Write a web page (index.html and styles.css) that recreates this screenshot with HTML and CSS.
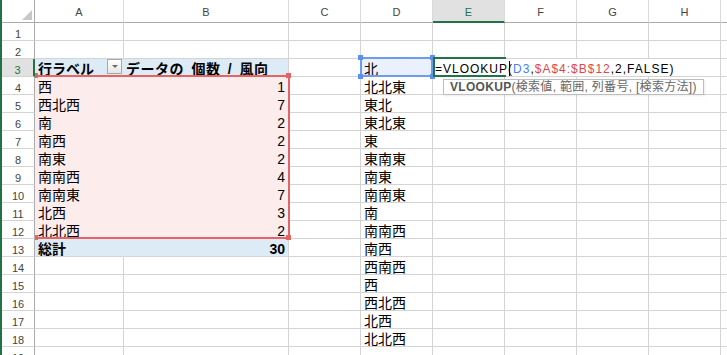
FILE: index.html
```html
<!DOCTYPE html>
<html lang="ja">
<head>
<meta charset="utf-8">
<title>Excel</title>
<link rel="stylesheet" href="styles.css">
</head>
<body>
<div class="app">
  <div class="frame"></div>
  <div class="sheet">
    <div class="corner"><span class="tri"></span></div>
    <div class="ch">A</div><div class="ch">B</div><div class="ch">C</div><div class="ch">D</div><div class="ch on">E</div><div class="ch">F</div><div class="ch">G</div><div class="ch">H</div><div class="ch"></div>

    <div class="rh">1</div><div class="c"></div><div class="c"></div><div class="c"></div><div class="c"></div><div class="c"></div><div class="c"></div><div class="c"></div><div class="c"></div><div class="c"></div>
    <div class="rh">2</div><div class="c"></div><div class="c"></div><div class="c"></div><div class="c"></div><div class="c"></div><div class="c"></div><div class="c"></div><div class="c"></div><div class="c"></div>

    <div class="rh on">3</div>
    <div class="c ph ph-a"><span>行ラベル</span><span class="dd"></span></div>
    <div class="c ph ph-b">データの 個数 / 風向</div>
    <div class="c"></div>
    <div class="c dsel">北</div>
    <div class="c edit">=VLOOKUP(<i class="caret"></i><span class="rb">D3</span>,<span class="rr">$A$4:$B$12</span>,2,FALSE)</div>
    <div class="c"></div>

    <div class="rh">4</div><div class="c pv">西</div><div class="c pv num">1</div><div class="c"></div><div class="c">北北東</div><div class="c"></div><div class="c"></div><div class="c"></div><div class="c"></div><div class="c"></div>
    <div class="rh">5</div><div class="c pv">西北西</div><div class="c pv num">7</div><div class="c"></div><div class="c">東北</div><div class="c"></div><div class="c"></div><div class="c"></div><div class="c"></div><div class="c"></div>
    <div class="rh">6</div><div class="c pv">南</div><div class="c pv num">2</div><div class="c"></div><div class="c">東北東</div><div class="c"></div><div class="c"></div><div class="c"></div><div class="c"></div><div class="c"></div>
    <div class="rh">7</div><div class="c pv">南西</div><div class="c pv num">2</div><div class="c"></div><div class="c">東</div><div class="c"></div><div class="c"></div><div class="c"></div><div class="c"></div><div class="c"></div>
    <div class="rh">8</div><div class="c pv">南東</div><div class="c pv num">2</div><div class="c"></div><div class="c">東南東</div><div class="c"></div><div class="c"></div><div class="c"></div><div class="c"></div><div class="c"></div>
    <div class="rh">9</div><div class="c pv">南南西</div><div class="c pv num">4</div><div class="c"></div><div class="c">南東</div><div class="c"></div><div class="c"></div><div class="c"></div><div class="c"></div><div class="c"></div>
    <div class="rh">10</div><div class="c pv">南南東</div><div class="c pv num">7</div><div class="c"></div><div class="c">南南東</div><div class="c"></div><div class="c"></div><div class="c"></div><div class="c"></div><div class="c"></div>
    <div class="rh">11</div><div class="c pv">北西</div><div class="c pv num">3</div><div class="c"></div><div class="c">南</div><div class="c"></div><div class="c"></div><div class="c"></div><div class="c"></div><div class="c"></div>
    <div class="rh">12</div><div class="c pv">北北西</div><div class="c pv num">2</div><div class="c"></div><div class="c">南南西</div><div class="c"></div><div class="c"></div><div class="c"></div><div class="c"></div><div class="c"></div>

    <div class="rh">13</div><div class="c pt pt-a">総計</div><div class="c pt num">30</div><div class="c"></div><div class="c">南西</div><div class="c"></div><div class="c"></div><div class="c"></div><div class="c"></div><div class="c"></div>

    <div class="rh">14</div><div class="c"></div><div class="c"></div><div class="c"></div><div class="c">西南西</div><div class="c"></div><div class="c"></div><div class="c"></div><div class="c"></div><div class="c"></div>
    <div class="rh">15</div><div class="c"></div><div class="c"></div><div class="c"></div><div class="c">西</div><div class="c"></div><div class="c"></div><div class="c"></div><div class="c"></div><div class="c"></div>
    <div class="rh">16</div><div class="c"></div><div class="c"></div><div class="c"></div><div class="c">西北西</div><div class="c"></div><div class="c"></div><div class="c"></div><div class="c"></div><div class="c"></div>
    <div class="rh">17</div><div class="c"></div><div class="c"></div><div class="c"></div><div class="c">北西</div><div class="c"></div><div class="c"></div><div class="c"></div><div class="c"></div><div class="c"></div>
    <div class="rh">18</div><div class="c"></div><div class="c"></div><div class="c"></div><div class="c">北北西</div><div class="c"></div><div class="c"></div><div class="c"></div><div class="c"></div><div class="c"></div>
    <div class="rh">19</div><div class="c"></div><div class="c"></div><div class="c"></div><div class="c"></div><div class="c"></div><div class="c"></div><div class="c"></div><div class="c"></div><div class="c"></div>
  </div>

  <div class="hl-red"></div>
  <div class="hd hd-r r-tl"></div><div class="hd hd-r r-tr"></div><div class="hd hd-r r-bl"></div><div class="hd hd-r r-br"></div>

  <div class="hl-blue"></div>
  <div class="hd hd-b b-tl"></div><div class="hd hd-b b-tr"></div><div class="hd hd-b b-bl"></div><div class="hd hd-b b-br"></div>

  <div class="hl-green"></div>

  <div class="tip"><b>VLOOKUP</b>(検索値, 範囲, 列番号, [検索方法])</div>
</div>
</body>
</html>
```

FILE: styles.css
```css
* { box-sizing: border-box; }

html, body {
  margin: 0;
  padding: 0;
  background: #fff;
}

body {
  font-family: "Liberation Sans", "Noto Sans CJK JP", sans-serif;
  overflow: hidden;
}

.app {
  position: relative;
  display: flex;
  width: 727px;
  height: 355px;
  overflow: hidden;
}

.frame {
  flex: none;
  width: 2px;
  background: #217346;
}

.sheet {
  flex: 1;
  display: grid;
  grid-template-columns: 33px 89px 165px repeat(6, 72px) 1fr;
  grid-template-rows: 23px repeat(19, 18px);
}

/* headers */
.corner {
  border-right: 1px solid #ababab;
  border-bottom: 1px solid #ababab;
  display: flex;
  justify-content: flex-end;
  align-items: flex-end;
  padding: 0 2px 2px 0;
}

.tri {
  width: 0;
  height: 0;
  border-left: 10px solid transparent;
  border-bottom: 10px solid #c8c8c8;
}

.ch {
  border-right: 1px solid #dadada;
  border-bottom: 1px solid #ababab;
  font-size: 11px;
  line-height: 24px;
  text-align: center;
  color: #444;
}

.ch.on {
  background: #e1e1e1;
  color: #217346;
  border-bottom: 2px solid #217346;
}

.rh {
  border-right: 1px solid #ababab;
  border-bottom: 1px solid #d4d4d4;
  font-size: 11px;
  line-height: 22px;
  text-align: center;
  color: #444;
  overflow: hidden;
}

.rh.on {
  background: #e1e1e1;
  color: #217346;
  border-right: 2px solid #217346;
}

/* cells */
.c {
  border-right: 1px solid #d4d4d4;
  border-bottom: 1px solid #d4d4d4;
  font-size: 14px;
  line-height: 20px;
  padding: 0 3px;
  white-space: nowrap;
  overflow: hidden;
  color: #000;
}

.num {
  text-align: right;
  padding-right: 3px;
}

/* pivot table */
.ph {
  background: #ddebf7;
  font-weight: bold;
}

.ph-a {
  border-right-color: #ddebf7;
  display: flex;
  justify-content: space-between;
  align-items: flex-start;
  padding-right: 1px;
}

.ph-b {
  padding-left: 2px;
  word-spacing: 3px;
  letter-spacing: 0.5px;
}

.dd {
  flex: none;
  width: 15px;
  height: 15px;
  border: 1px solid #a8a8a8;
  background: linear-gradient(#ffffff, #e6e6e6);
  display: flex;
  align-items: center;
  justify-content: center;
}

.dd::after {
  content: "";
  border-left: 3px solid transparent;
  border-right: 3px solid transparent;
  border-top: 3px solid #6a6a6a;
}

.pv {
  background: #fdecec;
  border-color: #fdecec;
}

.pt {
  background: #ddebf7;
  font-weight: bold;
}

.pt-a {
  border-right-color: #ddebf7;
}

.dsel {
  background: #eaf1fd;
}

/* editing cell */
.edit {
  grid-column: span 4;
  background: #fff;
  font-size: 12px;
  letter-spacing: 1px;
  padding-left: 2px;
}

.rb { color: #4a80e8; }
.rr { color: #e04848; }

.caret {
  display: inline-block;
  width: 1px;
  height: 15px;
  background: #000;
  vertical-align: -3px;
  margin-left: -4px;
  margin-right: 3px;
}

/* overlays */
.hl-red {
  position: absolute;
  left: 35px;
  top: 75px;
  width: 255px;
  height: 164px;
  border: 2px solid #e46464;
  border-left: 0;
}

.hl-blue {
  position: absolute;
  left: 360px;
  top: 57px;
  width: 73px;
  height: 20px;
  border: 2px solid #6c9cf0;
}

.hl-green {
  position: absolute;
  left: 433px;
  top: 57px;
  width: 73px;
  height: 20px;
  border: 2px solid #217346;
  border-right: 0;
}

.hd {
  position: absolute;
  width: 5px;
  height: 5px;
}

.hd-r { background: #e46464; }
.hd-b { background: #5b8ff0; }

.r-tl { left: 35px; top: 73px; width: 3px; }
.r-tr { left: 286px; top: 73px; }
.r-bl { left: 35px; top: 235px; width: 3px; }
.r-br { left: 286px; top: 235px; }

.b-tl { left: 358px; top: 55px; }
.b-tr { left: 430px; top: 55px; }
.b-bl { left: 358px; top: 74px; }
.b-br { left: 430px; top: 74px; }

.tip {
  position: absolute;
  left: 443px;
  top: 79px;
  width: 261px;
  height: 16px;
  border: 1px solid #bdbdbd;
  background: #fff;
  font-size: 12px;
  line-height: 14px;
  color: #666;
  padding-left: 6px;
  white-space: nowrap;
  letter-spacing: 0.3px;
  box-shadow: 1px 1px 2px rgba(0, 0, 0, 0.08);
}

.tip b {
  color: #555;
}
```
